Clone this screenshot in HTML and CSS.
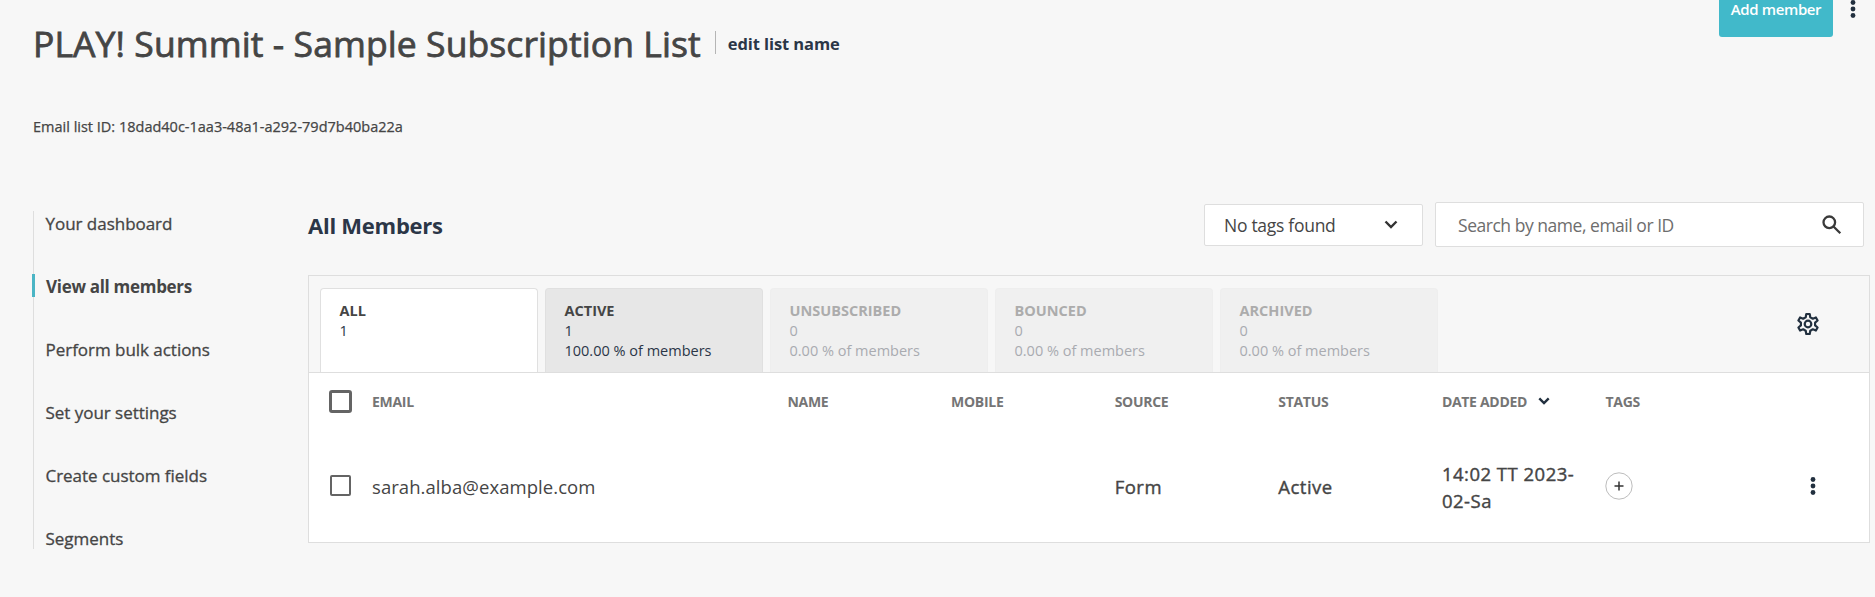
FILE: index.html
```html
<!DOCTYPE html>
<html lang="en">
<head>
<meta charset="utf-8">
<title>All Members</title>
<link rel="stylesheet" href="styles.css">
</head>
<body>
<header class="page-header">
  <div class="heading">
    <h1 class="title">PLAY! Summit - Sample Subscription List</h1>
    <a class="edit-link">edit list name</a>
  </div>
  <div class="header-actions">
    <button class="btn-add"><span>Add member</span></button>
    <svg class="dots" viewBox="0 0 6 20"><circle cx="3" cy="3.5" r="2.4"/><circle cx="3" cy="10" r="2.4"/><circle cx="3" cy="16.5" r="2.4"/></svg>
  </div>
</header>
<p class="list-id">Email list ID: 18dad40c-1aa3-48a1-a292-79d7b40ba22a</p>
<div class="layout">
  <nav class="side-nav">
    <a class="nav-item">Your dashboard</a>
    <a class="nav-item active">View all members</a>
    <a class="nav-item">Perform bulk actions</a>
    <a class="nav-item">Set your settings</a>
    <a class="nav-item">Create custom fields</a>
    <a class="nav-item">Segments</a>
  </nav>
  <main class="content">
    <div class="toolbar">
      <h2 class="subtitle">All Members</h2>
      <div class="filters">
        <div class="select"><span>No tags found</span>
          <svg class="chev" viewBox="0 0 14 9"><path d="M1.5 1.5 7 7l5.500-5.500"/></svg></div>
        <div class="search"><span>Search by name, email or ID</span>
          <svg class="magnifier" viewBox="0 0 20 20"><circle cx="7.300" cy="7.300" r="5.800"/><path d="m11.500 11.500 6.800 6.800"/></svg></div>
      </div>
    </div>
    <section class="panel">
      <div class="tabs">
        <div class="tab selected"><b>ALL</b><span>1</span></div>
        <div class="tab"><b>ACTIVE</b><span>1</span><span>100.00 % of members</span></div>
        <div class="tab disabled"><b>UNSUBSCRIBED</b><span>0</span><span>0.00 % of members</span></div>
        <div class="tab disabled"><b>BOUNCED</b><span>0</span><span>0.00 % of members</span></div>
        <div class="tab disabled"><b>ARCHIVED</b><span>0</span><span>0.00 % of members</span></div>
        <svg class="gear" viewBox="0 0 24 24"><path d="M10.300 2h3.400l.6 3.300 2.500 1.400 3.100-1.200 1.700 3-2.500 2.100v2.800l2.500 2.100-1.700 3-3.100-1.200-2.500 1.400-.6 3.300h-3.400l-.6-3.300-2.500-1.400-3.100 1.200-1.700-3 2.500-2.100v-2.800L2.400 8.500l1.700-3 3.100 1.200 2.500-1.400z"/><circle cx="12" cy="12" r="3.300"/></svg>
      </div>
      <div class="row head">
        <i class="check bold"></i><span>EMAIL</span><span>NAME</span><span>MOBILE</span><span>SOURCE</span><span>STATUS</span>
        <span class="sort">DATE ADDED<svg class="chev small" viewBox="0 0 14 9"><path d="M1.500 1.500 7 7l5.500-5.500"/></svg></span><span>TAGS</span>
      </div>
      <div class="row member">
        <i class="check"></i><span class="email">sarah.alba@example.com</span><span></span><span></span><span>Form</span><span>Active</span><span>14:02 TT 2023-<br>02-Sa</span>
        <span class="tags"><svg class="plus" viewBox="0 0 28 28"><circle cx="14" cy="14" r="13.200"/><path d="M9.500 14h9M14 9.500v9"/></svg></span>
        <svg class="dots" viewBox="0 0 6 20"><circle cx="3" cy="3.500" r="2.400"/><circle cx="3" cy="10" r="2.400"/><circle cx="3" cy="16.500" r="2.400"/></svg>
      </div>
    </section>
  </main>
</div>
</body>
</html>
```
FILE: styles.css
```css
* { box-sizing: border-box; }
body { margin: 0; height: 597px; overflow: hidden; background: #f7f7f7; color: #454545; font-family: "Open Sans", "Noto Sans", sans-serif; }
h1, h2, p { margin: 0; }
svg { display: block; flex: none; }
.page-header { display: flex; justify-content: space-between; height: 88px; padding: 0 19px 0 33px; }
.heading { display: flex; height: 88px; padding-top: 18px; }
.title { font-size: 35.5px; line-height: 50px; font-weight: 400; letter-spacing: .09px; -webkit-text-stroke: .8px; white-space: nowrap; }
.edit-link { align-self: flex-start; height: 23px; margin: 13px 0 0 14px; padding-left: 12px; border-left: 1px solid #b5b5b5; color: #2b3647; font-size: 16.500px; line-height: 25px; font-weight: 700; letter-spacing: -.08px; white-space: nowrap; }
.header-actions { display: flex; gap: 17px; }
.btn-add { width: 114px; height: 57px; margin-top: -20px; padding: 0; border: 0; border-radius: 3px; background: #41b9ca; color: #fff; font: 600 15px/58px "Open Sans", sans-serif; letter-spacing: -.38px; }
.dots { width: 6px; height: 20px; fill: #22303f; }
.header-actions .dots { margin-top: -1px; }
.list-id { padding: 26px 0 0 33px; height: 123px; font-size: 14.500px; line-height: 25px; -webkit-text-stroke: .25px; }
.layout { display: flex; padding-left: 33px; }
.side-nav { display: flex; flex-direction: column; gap: 40px; width: 275px; height: 338px; border-left: 1px solid #dedede; }
.nav-item { height: 23px; padding-left: 11.500px; font-size: 17px; line-height: 25px; letter-spacing: -.03px; -webkit-text-stroke: .3px; }
.nav-item.active { margin-left: -2px; padding-left: 11px; border-left: 3px solid #4bb5c5; font-weight: 700; letter-spacing: -.3px; -webkit-text-stroke: 0; }
.content { width: 1562px; margin-top: -9px; }
.toolbar { display: flex; justify-content: space-between; height: 73px; padding-right: 6px; }
.subtitle { margin-top: 7px; color: #2b3647; font-size: 22px; line-height: 32px; font-weight: 700; letter-spacing: -.25px; }
.filters { display: flex; align-items: center; gap: 12px; height: 45px; }
.select, .search { display: flex; align-items: center; justify-content: space-between; border: 1px solid #dedede; border-radius: 2px; background: #fff; font-size: 17.500px; letter-spacing: -.28px; }
.select { width: 219px; height: 42px; padding: 0 24px 0 19px; }
.search { width: 429px; height: 45px; padding: 0 21px 0 22px; color: #6d6d6d; letter-spacing: -.47px; }
.chev { width: 14px; height: 9px; fill: none; stroke: #333; stroke-width: 2.400; }
.magnifier { width: 20px; height: 20px; fill: none; stroke: #3a3a3a; stroke-width: 2.300; }
.panel { height: 268px; border: 1px solid #dedede; background: #fff; }
.tabs { display: flex; align-items: flex-end; gap: 7px; height: 97px; padding: 0 49px 0 11px; border-bottom: 1px solid #dedede; background: #f7f7f7; }
.tab { display: flex; flex-direction: column; width: 218px; height: 84px; padding: 12px 0 0 18.500px; border: 1px solid #e0e0e0; border-bottom: 0; border-radius: 4px 4px 0 0; background: #e7e7e7; color: #2b3647; font-size: 14.500px; line-height: 20px; }
.tab b { color: #454545; }
.tab.selected { background: #fff; }
.tab.disabled { border-color: #eee; background: #f0f0f0; color: #a9abb0; }
.tab.disabled b { color: #acacac; }
.gear { width: 24px; height: 24px; margin: 0 0 36px auto; fill: none; stroke: #22303f; stroke-width: 2.200; stroke-linejoin: round; }
.row { display: grid; grid-template-columns: 43px 415.500px repeat(5, 163.600px) 204.500px 6px; align-items: center; padding-left: 20px; }
.head { height: 56px; color: #757575; font-size: 14px; font-weight: 700; letter-spacing: -.3px; }
.check { width: 21px; height: 21px; margin: 0 0 3px 1px; border: 2px solid #646464; border-radius: 2px; }
.check.bold { width: 23px; height: 23px; margin: 0; border-width: 3px; border-radius: 3px; }
.sort { display: flex; align-items: center; gap: 11px; }
.small { width: 12px; height: 8px; margin-top: -1px; stroke: #22303f; stroke-width: 2.800; }
.member { height: 115px; font-size: 18.500px; line-height: 27px; letter-spacing: .5px; -webkit-text-stroke: .4px; }
.email { letter-spacing: .06px; -webkit-text-stroke: 0; }
.member svg { margin-bottom: 2px; }
.plus { width: 28px; height: 28px; fill: none; stroke: #bdbdbd; }
.plus path { stroke: #333; stroke-width: 1.500; }
```
